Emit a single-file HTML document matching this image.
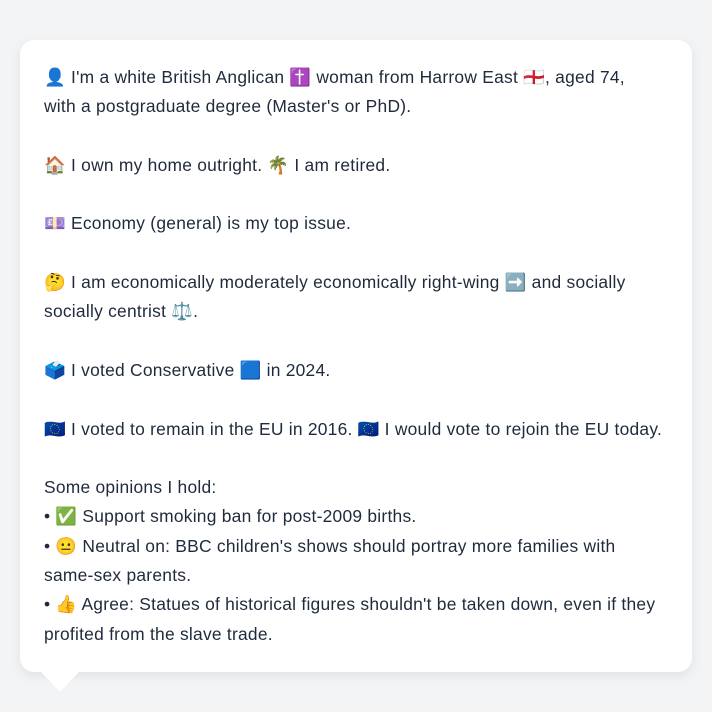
<!DOCTYPE html>
<html><head><meta charset="utf-8"><style>
html,body{margin:0;padding:0;width:712px;height:712px;background:#f3f4f6;overflow:hidden}
.card{position:absolute;left:20px;top:40px;width:672px;height:632px;background:#fff;border-radius:14px;box-shadow:0 4px 12px rgba(0,0,0,0.08)}
.tail{position:absolute;left:40px;top:671px;width:0;height:0;border-left:20px solid transparent;border-right:20px solid transparent;border-top:21px solid #fff}
.txt{position:absolute;left:44px;top:63px;width:640px;font-family:"Liberation Sans","Noto Color Emoji",sans-serif;font-size:17.4px;letter-spacing:0.25px;line-height:29.3px;color:#1f2a3c;white-space:nowrap}
</style></head><body>
<div class="card"></div>
<div class="tail"></div>
<div class="txt">👤 I'm a white British Anglican ✝️ woman from Harrow East 🏴󠁧󠁢󠁥󠁮󠁧󠁿, aged 74,<br>with a postgraduate degree (Master's or PhD).<br><br>🏠 I own my home outright. 🌴 I am retired.<br><br>💷 Economy (general) is my top issue.<br><br>🤔 I am economically moderately economically right-wing ➡️ and socially<br>socially centrist ⚖️.<br><br>🗳️ I voted Conservative 🟦 in 2024.<br><br>🇪🇺 I voted to remain in the EU in 2016. 🇪🇺 I would vote to rejoin the EU today.<br><br>Some opinions I hold:<br>• ✅ Support smoking ban for post-2009 births.<br>• 😐 Neutral on: BBC children's shows should portray more families with<br>same-sex parents.<br>• 👍 Agree: Statues of historical figures shouldn't be taken down, even if they<br>profited from the slave trade.</div>
</body></html>
